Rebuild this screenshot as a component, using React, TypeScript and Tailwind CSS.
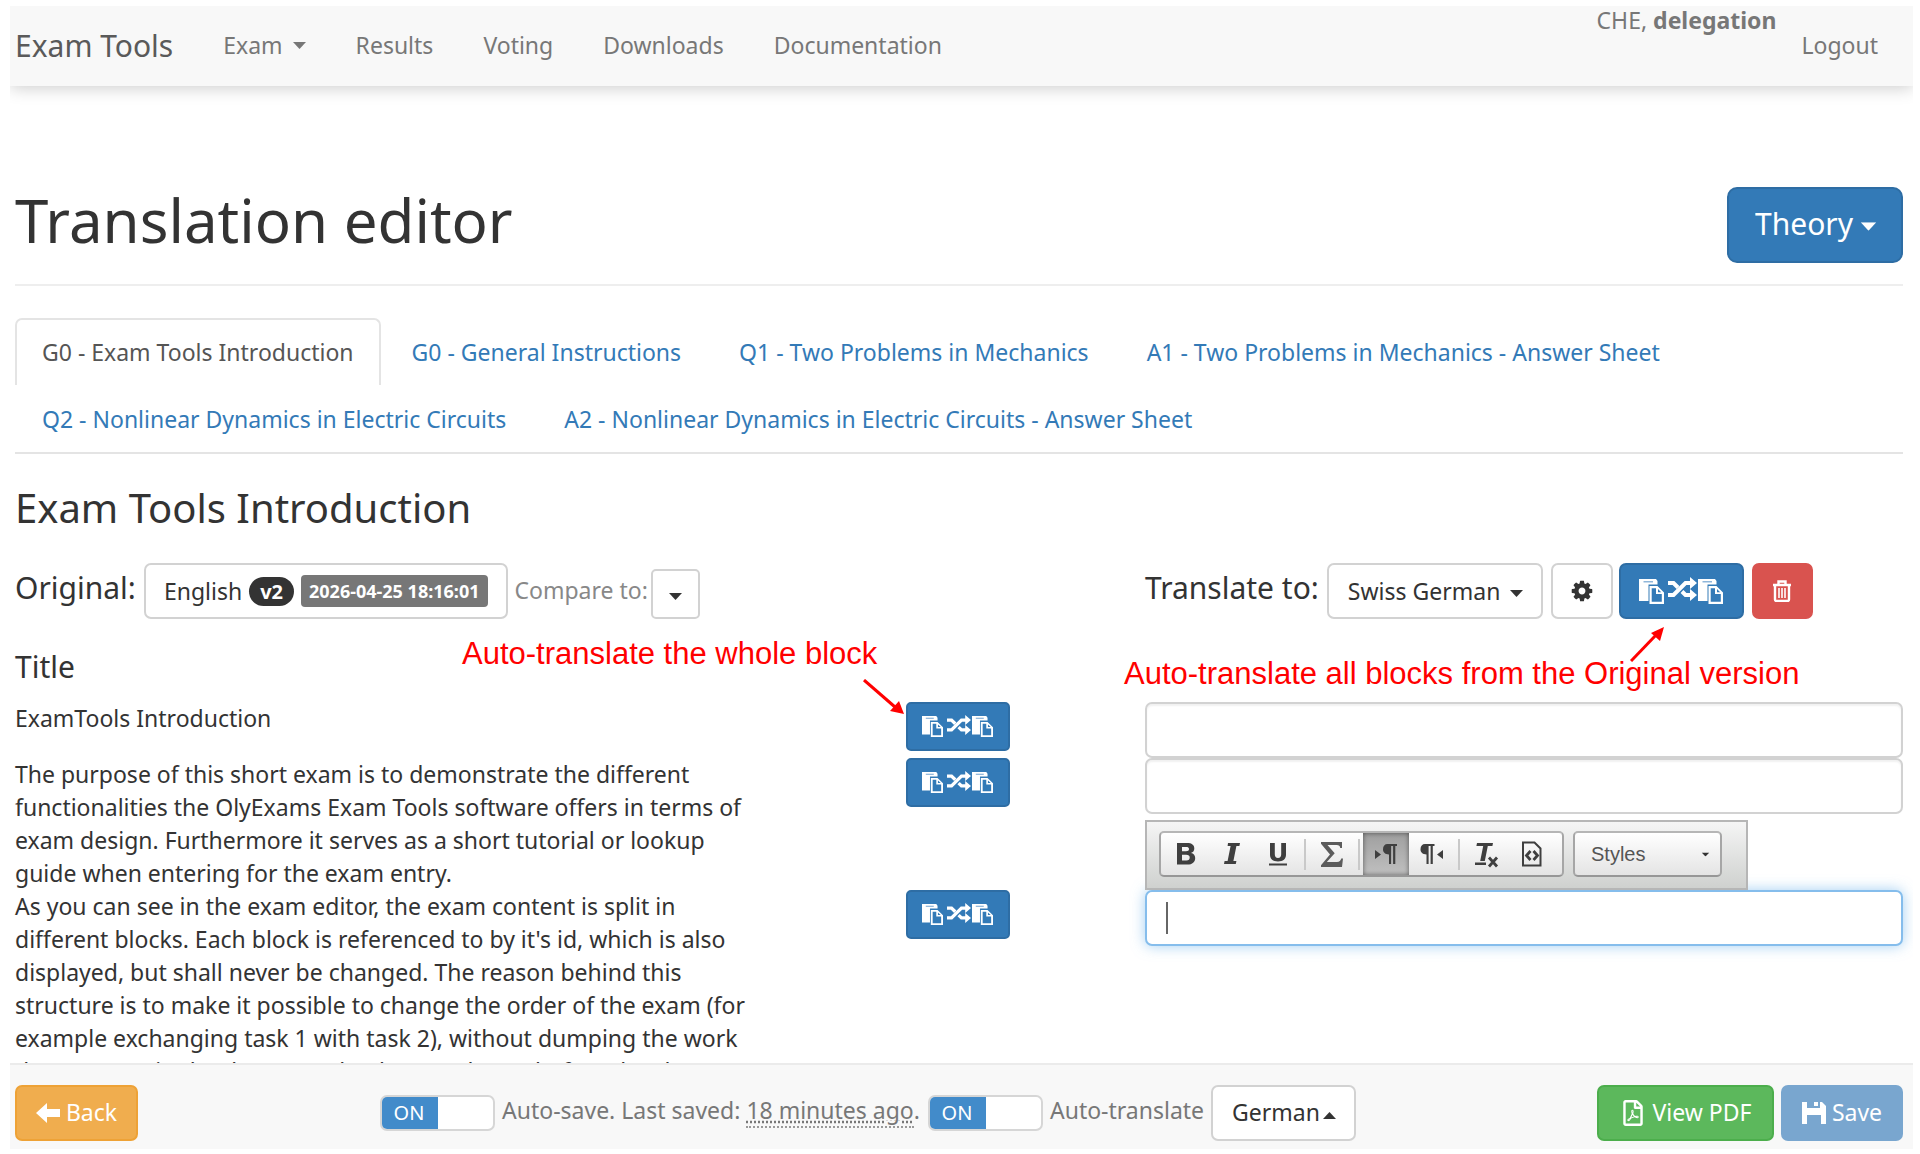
import React from "react";
import clsx from "clsx";
import { FaRegFilePdf } from "react-icons/fa";

interface DropdownProps {
	label: string;
	options: string[];
	className: string;
	caretClassName: string;
	up?: boolean;
	id?: string;
}

const navLinks = ["Results", "Voting", "Downloads", "Documentation"];

const tabs = [
	"G0 - Exam Tools Introduction",
	"G0 - General Instructions",
	"Q1 - Two Problems in Mechanics",
	"A1 - Two Problems in Mechanics - Answer Sheet",
	"Q2 - Nonlinear Dynamics in Electric Circuits",
	"A2 - Nonlinear Dynamics in Electric Circuits - Answer Sheet",
];

const blocks = [
	"ExamTools Introduction",
	"The purpose of this short exam is to demonstrate the different functionalities the OlyExams Exam Tools software offers in terms of exam design. Furthermore it serves as a short tutorial or lookup guide when entering for the exam entry.",
	"As you can see in the exam editor, the exam content is split in different blocks. Each block is referenced to by it's id, which is also displayed, but shall never be changed. The reason behind this structure is to make it possible to change the order of the exam (for example exchanging task 1 with task 2), without dumping the work that was put in the document by the translators before the change.",
];

function Caret({ up, className }: { up?: boolean; className?: string }) {
	return (
		<svg viewBox="0 0 13 7" className={clsx("h-[7px] w-[13px] fill-current", className)} aria-hidden="true">
			<path d={up ? "M0 7h13L6.500 0z" : "M0 0h13L6.500 7z"} />
		</svg>
	);
}

function Dropdown(props: DropdownProps) {
	return (
		<div className="relative inline-flex shrink-0">
			<select
				id={props.id}
				aria-label={props.label}
				className={clsx("cursor-pointer appearance-none border-2", props.className)}
			>
				{props.options.map((option) => (
					<option key={option}>{option}</option>
				))}
			</select>
			<Caret up={props.up} className={clsx("pointer-events-none absolute", props.caretClassName)} />
		</div>
	);
}

function PasteIcon({ className }: { className?: string }) {
	return (
		<svg viewBox="0 0 25 25" className={clsx("fill-current", className)} aria-hidden="true">
			<path d="M0 0h17l1.500 2v3.500H9.500V22H0z" />
			<path d="M4.500 2h9.500v1.500H4.500z" fill="#8fb6da" />
			<path fillRule="evenodd" d="M10.500 7h8l6.500 6.500V25H10.500zm2.200 2.200v13.600h10.100V15h-5.800V9.200zm6.300.8v3.200h3.200z" />
		</svg>
	);
}

function RandomIcon({ className }: { className?: string }) {
	return (
		<svg viewBox="0 0 29 24" className={clsx("fill-current", className)} aria-hidden="true">
			<path d="M0 18h5.500L17.500 6H23" fill="none" stroke="currentColor" strokeWidth="4" />
			<path d="M0 6h5.500l4.500 4.500M14 14.500l3.500 3.500H23" fill="none" stroke="currentColor" strokeWidth="4" />
			<path d="M22 0l7 6-7 6zM22 12l7 6-7 6z" />
		</svg>
	);
}

function TranslateButton({ large, label }: { large?: boolean; label: string }) {
	const iconClass = large ? "size-[25px]" : "size-[21px]";

	return (
		<button
			type="button"
			aria-label={label}
			className={clsx(
				"flex shrink-0 items-center justify-center border-2 border-[#2e6da4] bg-[#337ab7] text-white",
				large ? "h-14 w-[125px] rounded-[7px]" : "h-[49px] w-[104px] rounded-[5px]"
			)}
		>
			<PasteIcon className={iconClass} />
			<RandomIcon className={clsx("mr-px mb-1 ml-1", large ? "h-6 w-[29px]" : "h-5 w-6")} />
			<PasteIcon className={iconClass} />
		</button>
	);
}

function Navbar() {
	return (
		<nav className="relative z-10 flex h-20 shrink-0 items-start bg-[#f8f8f8] pr-[10px] pl-[5px] text-[#777] shadow-[0_2px_16px_rgba(0,0,0,0.2)] [clip-path:inset(0_0_-24px_0)]">
			<a href="#" className="mr-[25px] pt-[23px] text-[30px] leading-[33px] text-[#5a5a5a]">
				Exam Tools
			</a>
			<button type="button" className="flex items-center gap-[10px] px-[25px] pt-[23px] leading-[33px]">
				Exam
				<Caret />
			</button>
			{navLinks.map((link) => (
				<a key={link} href="#" className="px-[25px] pt-[23px] leading-[33px]">
					{link}
				</a>
			))}
			<div className="ml-auto flex">
				<p className="leading-7">
					CHE, <b>delegation</b>
				</p>
				<a href="#" className="px-[25px] pt-[23px] leading-[33px]">
					Logout
				</a>
			</div>
		</nav>
	);
}

function ToolButton({ label, active, children }: { label: string; active?: boolean; children: React.ReactNode }) {
	return (
		<button
			type="button"
			aria-label={label}
			className={clsx(
				"flex h-full w-[46px] items-center justify-center",
				active && "bg-linear-to-b from-[#9f9f9f] to-[#c0c0c0] shadow-[inset_0_0_5px_rgba(0,0,0,0.5)]"
			)}
		>
			<svg viewBox="0 0 28 28" className="size-7 fill-[#3f3f3f]" aria-hidden="true">
				{children}
			</svg>
		</button>
	);
}

function ToolSeparator() {
	return <span className="mx-[3px] h-[31px] w-[2px] bg-[#c9c9c9]" />;
}

function EditorToolbar() {
	return (
		<div className="absolute bottom-full left-0 flex h-[70px] w-[603px] items-center gap-[9px] border-2 border-[#b6b6b6] bg-linear-to-b from-[#f5f5f5] to-[#cfd1cf] pb-[2px] pl-3">
			<div className="flex h-[46px] w-[405px] items-center rounded-[5px] border-2 border-t-[#b6b6b6] border-r-[#a6a6a6] border-b-[#979797] border-l-[#a6a6a6] bg-linear-to-b from-white to-[#e4e4e4] pl-[2px]">
				<ToolButton label="Bold">
					<path fillRule="evenodd" d="M5 3h10c4.800 0 7.300 1.900 7.300 5.400 0 2.300-1.200 3.900-3.300 4.500 2.700.5 4.200 2.300 4.200 5 0 4-2.800 6.600-7.800 6.600H5zm5 4v4.300h4c2 0 3-.7 3-2.200S16 7 14 7zm0 7.800v5.700h4.400c2.300 0 3.300-1 3.300-2.900s-1.100-2.800-3.500-2.800z" />
				</ToolButton>
				<ToolButton label="Italic">
					<path d="M10 3h12l-.6 3h-3l-3 15h3l-.6 3H6l.6-3h3l3-15h-3z" />
				</ToolButton>
				<ToolButton label="Underline">
					<path d="M6 3h4.800v11.300c0 2.400 1 3.600 3.200 3.600s3.200-1.200 3.200-3.600V3H22v11.700c0 4.300-2.900 6.700-8 6.700s-8-2.400-8-6.700zM5 23.500h18v2H5z" />
				</ToolButton>
				<ToolSeparator />
				<ToolButton label="Math">
					<path d="M3 2h21v6h-1.800c-.3-2.200-1.200-3-3.600-3H9.500l7.200 8.200L8.800 22H19c2.600 0 3.600-1 4.200-3.400H25L24 27H3v-1.800l9-10.600-9-10.800z" fill="#5c5c5c" />
				</ToolButton>
				<ToolSeparator />
				<ToolButton label="Text direction from left to right" active>
					<path d="M3 10l6 4.500L3 19zM15.500 4H25v2h-1.700v18h-2.200V6h-2v18H17v-9.500c-3.700 0-6-2-6-5.200C11 6 12.800 4 15.500 4z" />
				</ToolButton>
				<ToolButton label="Text direction from right to left">
					<path d="M25 10l-6 4.500 6 4.500zM7 4h9.500v2h-1.700v18h-2.200V6h-2v18H8.500v-9.500c-3.700 0-6-2-6-5.200C2.500 6 4.300 4 7 4z" />
				</ToolButton>
				<ToolSeparator />
				<ToolButton label="Remove format">
					<path d="M5 3h16l-.6 3h-4.600l-3 15H8.200l3-15H4.400zM3 22.500h11V25H3z" />
					<path d="M17 17.500l8 9M25 17.500l-8 9" stroke="#3f3f3f" strokeWidth="2.800" fill="none" />
				</ToolButton>
				<ToolButton label="Source">
					<path d="M5 2.500h11.500l6 6v17H5z" fill="none" stroke="#3f3f3f" strokeWidth="2" />
					<path d="M12.500 11l-4 4.500 4 4.500M15.500 11l4 4.500-4 4.500" fill="none" stroke="#3f3f3f" strokeWidth="2.800" />
				</ToolButton>
			</div>
			<Dropdown
				label="Styles"
				options={["Styles"]}
				className="h-[46px] w-[149px] rounded-[5px] border-t-[#b6b6b6] border-r-[#a6a6a6] border-b-[#979797] border-l-[#a6a6a6] bg-linear-to-b from-white to-[#e4e4e4] pl-4 font-['Liberation_Sans',sans-serif] text-[20px] text-[#555]"
				caretClassName="top-5 right-[10px] scale-60 text-[#333]"
			/>
		</div>
	);
}

function BlockRow({ text, index }: { text: string; index: number }) {
	const focused = index === 2;

	return (
		<div className="grid grid-cols-[755fr_375fr_758fr] items-start">
			<p>{text}</p>
			<div className="flex min-h-[55px] justify-center">
				<TranslateButton label={`Auto-translate block ${index + 1}`} />
			</div>
			<div className="relative">
				{focused && <EditorToolbar />}
				<input
					type="text"
					aria-label={`Translation of block ${index + 1}`}
					className={clsx(
						"block h-14 w-full rounded-[7px] border-2 bg-white px-5 outline-none",
						focused
							? "border-[#85bdec] shadow-[0_0_14px_rgba(102,175,233,0.6)]"
							: "border-[#d2d2d2] shadow-[inset_0_2px_2px_rgba(0,0,0,0.06)]"
					)}
				/>
				{focused && <span className="absolute top-3 left-[21px] h-8 w-[2px] bg-[#666]" />}
			</div>
		</div>
	);
}

function Toggle({ id }: { id: string }) {
	return (
		<span className="relative flex h-9 w-[115px] shrink-0 overflow-hidden rounded-[7px] border-2 border-[#d6d6d6] bg-white">
			<input id={id} type="checkbox" defaultChecked className="peer absolute inset-0 size-full cursor-pointer opacity-0" />
			<span className="pointer-events-none -my-[2px] -ml-[2px] flex w-[58px] items-center justify-center bg-[#428bca] text-[20px] text-white">
				ON
			</span>
		</span>
	);
}

function Footer() {
	return (
		<footer className="relative z-10 flex h-[86px] shrink-0 items-center border-t-2 border-[#ebebeb] bg-[#f8f8f8] pt-[15px] pr-[10px] pb-1 pl-[5px] text-[#777]">
			<button type="button" className="flex h-14 w-[123px] items-center justify-center gap-[6px] rounded-[7px] border-2 border-[#eea236] bg-[#f0ad4e] text-white">
				<svg viewBox="0 0 24 20" className="h-5 w-6 fill-current" aria-hidden="true">
					<path d="M11 0v6h13v8H11v6L0 10z" />
				</svg>
				Back
			</button>
			<div className="ml-[242px] flex items-center">
				<Toggle id="auto-save" />
				<label htmlFor="auto-save" className="mr-2 ml-[7px] pb-1 whitespace-nowrap">
					Auto-save. Last saved:{" "}
					<span className="border-b-2 border-dotted border-[#999] underline decoration-dotted">18 minutes ago</span>.
				</label>
				<Toggle id="auto-translate" />
				<label htmlFor="auto-translate" className="mx-[7px] pb-1 whitespace-nowrap">
					Auto-translate
				</label>
				<Dropdown
					label="Auto-translate source language"
					options={["German"]}
					up
					className="h-14 w-[145px] rounded-[7px] border-[#d2d2d2] bg-white pl-[19px] text-[#333]"
					caretClassName="top-[27px] right-5 text-[#333]"
				/>
			</div>
			<div className="ml-auto flex gap-[7px] text-white">
				<button type="button" className="flex h-14 w-[177px] items-center justify-center gap-[7px] rounded-[7px] border-2 border-[#4cae4c] bg-[#5cb85c]">
					<FaRegFilePdf className="size-[26px]" />
					View PDF
				</button>
				<button type="button" className="flex h-14 w-[122px] items-center justify-center gap-[6px] rounded-[7px] bg-[#79a6cf]">
					<svg viewBox="0 0 24 24" className="size-6 fill-current" aria-hidden="true">
						<path fillRule="evenodd" d="M0 1h5v6h13V1h2l4 4v18h-5v-9H5v9H0zM12 1h4v4h-4z" />
					</svg>
					Save
				</button>
			</div>
		</footer>
	);
}

function Note({ className, children }: { className: string; children: React.ReactNode }) {
	return (
		<p className={clsx("pointer-events-none absolute z-10 font-['Liberation_Sans',sans-serif] text-[31px] leading-[34px] whitespace-nowrap text-[#f00]", className)}>
			{children}
		</p>
	);
}

export default function App() {
	return (
		<div className="flex h-screen flex-col bg-white pt-[6px] pr-[7px] pb-[5px] pl-[10px] font-['Noto_Sans',sans-serif] text-[23px] leading-[33px] text-[#333]">
			<Navbar />

			<main className="min-h-0 flex-1 overflow-hidden pt-[101px] pr-[10px] pl-[5px]">
				<header className="flex items-start justify-between border-b-2 border-[#eee] pb-[21px]">
					<h1 className="text-[60px] leading-[66px]">Translation editor</h1>
					<Dropdown
						label="Exam part"
						options={["Theory"]}
						className="h-[76px] w-[176px] rounded-[10px] border-[#2e6da4] bg-[#337ab7] pb-[2px] pl-[26px] text-[30px] leading-[44px] text-white"
						caretClassName="top-9 right-7 scale-120 text-white"
					/>
				</header>

				{/* exam sections */}
				<div className="mt-8 flex flex-wrap gap-x-[4px] border-b-2 border-[#e4e4e4]">
					{tabs.map((tab, index) => (
						<a
							key={tab}
							href="#"
							className={clsx(
								"rounded-t-[7px] border-2 border-b-0 px-[25px] py-4",
								index === 0 ? "border-[#e4e4e4] text-[#555]" : "border-transparent text-[#337ab7]"
							)}
						>
							{tab}
						</a>
					))}
				</div>

				<h2 className="mt-8 text-[40px] leading-[44px]">Exam Tools Introduction</h2>

				<div className="relative mt-[33px] grid grid-cols-[1130fr_758fr]">
					<div className="flex items-end">
						<span className="pb-[15px] text-[30px]">Original:</span>
						<button type="button" className="ml-2 flex h-14 items-center rounded-[7px] border-2 border-[#d2d2d2] px-[18px]">
							English
							<span className="ml-[7px] rounded-full bg-[#333] px-[11px] text-[20px] leading-[29px] font-bold text-white">v2</span>
							<span className="ml-[7px] rounded-[4px] bg-[#777] px-2 text-[18px] leading-8 font-bold text-white">
								2026-04-25 18:16:01
							</span>
						</button>
						<label htmlFor="compare" className="ml-[7px] pb-3 text-[#888]">
							Compare to:
						</label>
						<div className="ml-[3px] flex">
							<Dropdown
								id="compare"
								label="Compare to:"
								options={[""]}
								className="h-[50px] w-[49px] rounded-[5px] border-[#d2d2d2] bg-white"
								caretClassName="top-6 right-[18px]"
							/>
						</div>
					</div>
					<div className="flex items-end">
						<span className="pb-[15px] text-[30px]">Translate to:</span>
						<div className="mr-2 ml-[8px] flex">
							<Dropdown
								label="Target language"
								options={["Swiss German"]}
								className="h-14 rounded-[7px] border-[#d2d2d2] bg-white pr-10 pl-[19px]"
								caretClassName="top-[27px] right-5"
							/>
						</div>
						<button type="button" aria-label="Settings" className="mr-[6px] flex h-14 w-[62px] items-center justify-center rounded-[7px] border-2 border-[#d2d2d2]">
							<svg viewBox="0 0 1792 1792" className="size-6 fill-current" aria-hidden="true">
								<path d="M1152 896q0-106-75-181t-181-75-181 75-75 181 75 181 181 75 181-75 75-181zm512-109v222q0 12-8 23t-20 13l-185 28q-19 54-39 91 35 50 107 138 10 12 10 25t-9 23q-27 37-99 108t-94 71q-12 0-26-9l-138-108q-44 23-91 38-16 136-29 186-7 28-36 28h-222q-14 0-24.500-8.500t-11.500-21.500l-28-184q-49-16-90-37l-141 107q-10 9-25 9-14 0-25-11-126-114-165-168-7-10-7-23 0-12 8-23 15-21 51-66.500t54-70.500q-27-50-41-99l-183-27q-13-2-21-12.500t-8-23.500v-222q0-12 8-23t19-13l186-28q14-46 39-92-40-57-107-138-10-12-10-24 0-10 9-23 26-36 98.500-107.500t94.500-71.500q13 0 26 10l138 107q44-23 91-38 16-136 29-186 7-28 36-28h222q14 0 24.500 8.500t11.500 21.500l28 184q49 16 90 37l142-107q9-9 24-9 13 0 25 10 129 119 165 170 7 8 7 22 0 12-8 23-15 21-51 66.500t-54 70.500q26 50 41 98l183 28q13 2 21 12.500t8 23.500z" />
							</svg>
						</button>
						<TranslateButton large label="Auto-translate all blocks" />
						<button type="button" aria-label="Delete translation" className="ml-2 flex h-14 w-[61px] items-center justify-center rounded-[7px] border-2 border-[#d9534f] bg-[#d9534f] text-white">
							<svg viewBox="0 0 20 22" className="h-[22px] w-5 fill-none stroke-current" strokeWidth="2" aria-hidden="true">
								<path d="M1 5h18M6.500 4V1.500h7V4M3 6v13.500c0 .8.500 1.500 1.500 1.500h11c1 0 1.500-.7 1.500-1.500V6" strokeWidth="2.400" />
								<path d="M7 8v10M10 8v10M13 8v10" strokeWidth="1.600" />
							</svg>
						</button>
					</div>

					{/* help notes with arrows */}
					<Note className="top-[74px] left-[447px]">Auto-translate the whole block</Note>
					<svg viewBox="0 0 42 36" className="pointer-events-none absolute top-[116px] left-[848px] z-10 h-9 w-[42px] fill-[#f00]" aria-hidden="true">
						<path d="M1 1l31 27" stroke="#f00" strokeWidth="3" />
						<path d="M41 35l-14-3 9-10z" />
					</svg>
					<Note className="top-[94px] left-[1109px]">Auto-translate all blocks from the Original version</Note>
					<svg viewBox="0 0 36 36" className="pointer-events-none absolute top-[63px] left-[1615px] z-10 size-9 fill-[#f00]" aria-hidden="true">
						<path d="M1 35l26-27" stroke="#f00" strokeWidth="3" />
						<path d="M34 1l-4 14-9-8z" />
					</svg>
				</div>

				<h3 className="mt-[31px] mb-[19px] text-[30px] leading-[33px]">Title</h3>

				{blocks.map((block, index) => (
					<BlockRow key={index} text={block} index={index} />
				))}
			</main>

			<Footer />
		</div>
	);
}
